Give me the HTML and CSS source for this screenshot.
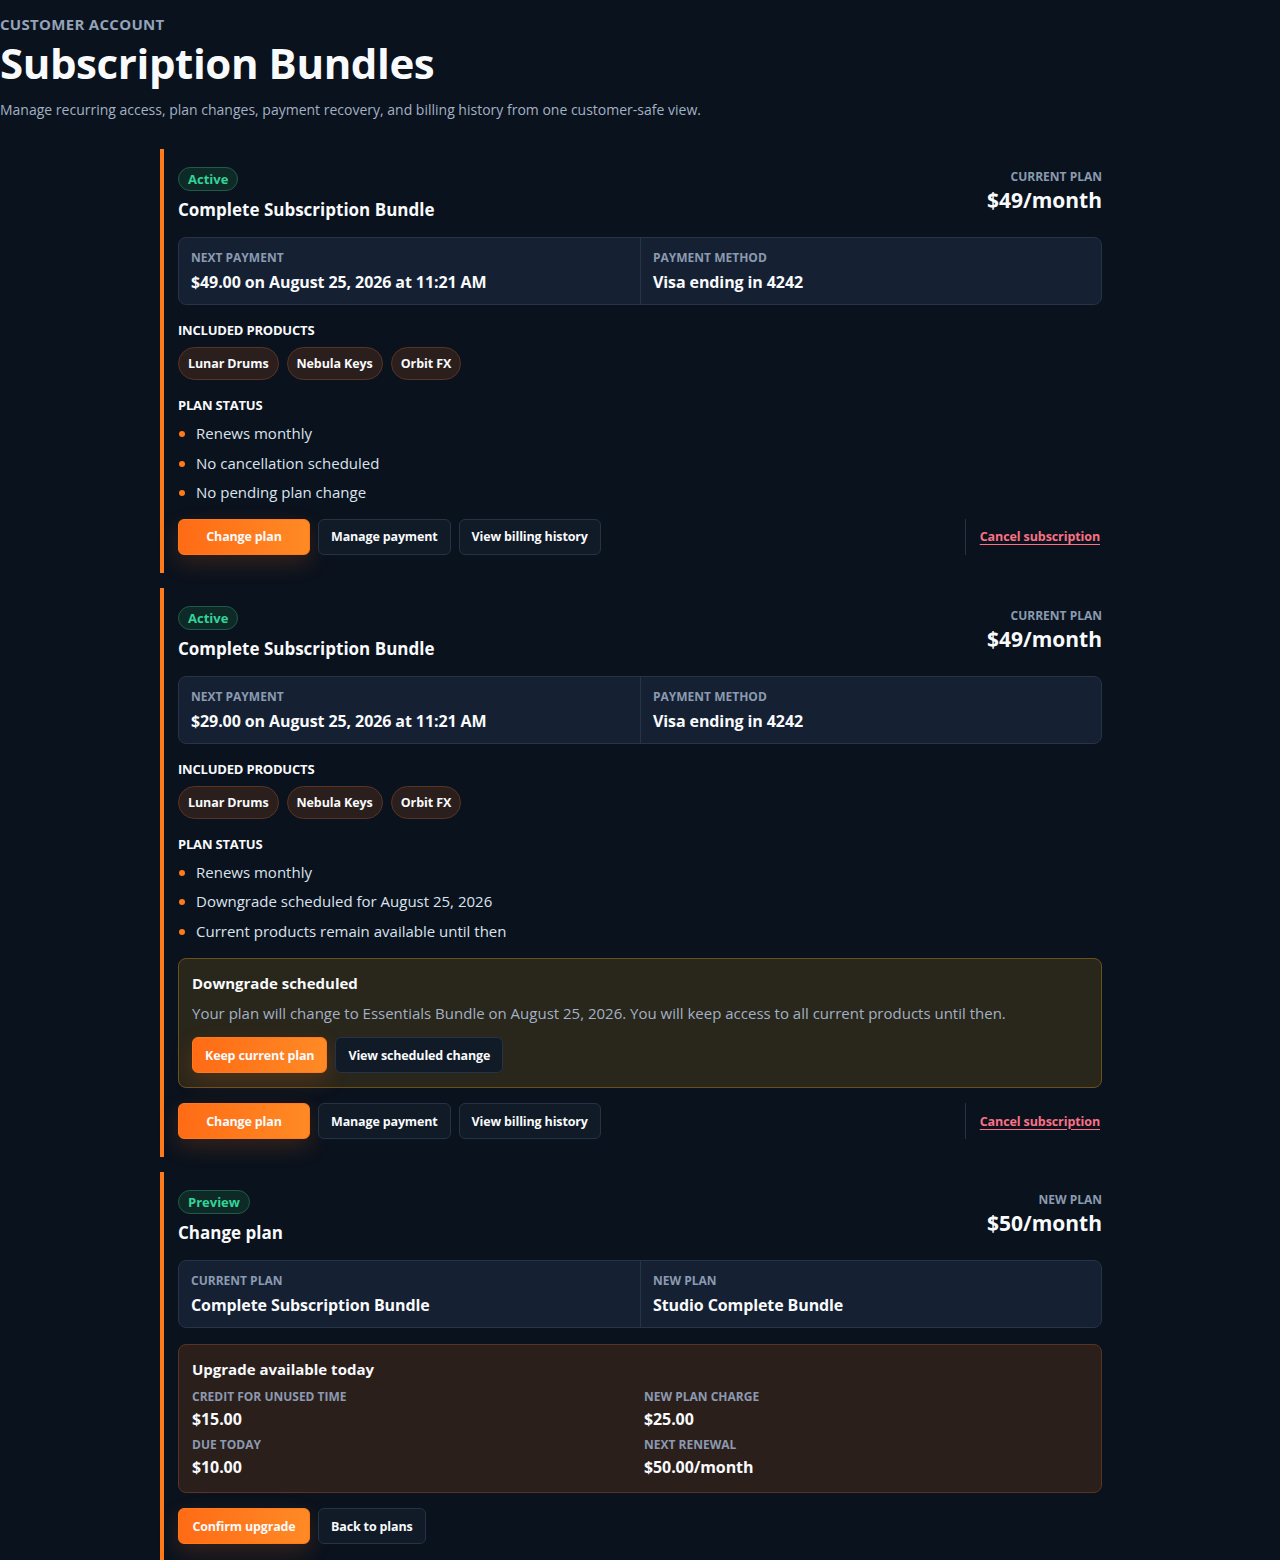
FILE: index.html
```html
<!DOCTYPE html>
<html lang="en">
<head>
  <meta charset="UTF-8">
  <title>Subscription Bundles</title>
  <link rel="stylesheet" href="styles.css">
</head>
<body>
  <header class="page-head">
    <div class="eyebrow">Customer account</div>
    <h1>Subscription Bundles</h1>
    <p class="lede">Manage recurring access, plan changes, payment recovery, and billing history from one customer-safe view.</p>
  </header>

  <main class="stack">
    <!-- bundle 1 -->
    <section class="card">
      <div class="card-head">
        <div>
          <span class="badge">Active</span>
          <h2>Complete Subscription Bundle</h2>
        </div>
        <div class="price">
          <div class="label">Current plan</div>
          <div class="amount">$49/month</div>
        </div>
      </div>

      <div class="facts">
        <div class="fact">
          <div class="label">Next payment</div>
          <div class="value">$49.00 on August 25, 2026 at 11:21 AM</div>
        </div>
        <div class="fact">
          <div class="label">Payment method</div>
          <div class="value">Visa ending in 4242</div>
        </div>
      </div>

      <h3>Included products</h3>
      <div class="chips">
        <span class="chip">Lunar Drums</span>
        <span class="chip">Nebula Keys</span>
        <span class="chip">Orbit FX</span>
      </div>

      <h3>Plan status</h3>
      <ul class="status">
        <li>Renews monthly</li>
        <li>No cancellation scheduled</li>
        <li>No pending plan change</li>
      </ul>

      <div class="actions">
        <button class="btn primary">Change plan</button>
        <button class="btn">Manage payment</button>
        <button class="btn">View billing history</button>
        <div class="danger-zone">
          <a href="#" class="cancel">Cancel subscription</a>
        </div>
      </div>
    </section>

    <!-- bundle 2 -->
    <section class="card">
      <div class="card-head">
        <div>
          <span class="badge">Active</span>
          <h2>Complete Subscription Bundle</h2>
        </div>
        <div class="price">
          <div class="label">Current plan</div>
          <div class="amount">$49/month</div>
        </div>
      </div>

      <div class="facts">
        <div class="fact">
          <div class="label">Next payment</div>
          <div class="value">$29.00 on August 25, 2026 at 11:21 AM</div>
        </div>
        <div class="fact">
          <div class="label">Payment method</div>
          <div class="value">Visa ending in 4242</div>
        </div>
      </div>

      <h3>Included products</h3>
      <div class="chips">
        <span class="chip">Lunar Drums</span>
        <span class="chip">Nebula Keys</span>
        <span class="chip">Orbit FX</span>
      </div>

      <h3>Plan status</h3>
      <ul class="status">
        <li>Renews monthly</li>
        <li>Downgrade scheduled for August 25, 2026</li>
        <li>Current products remain available until then</li>
      </ul>

      <div class="notice warn">
        <h4>Downgrade scheduled</h4>
        <p>Your plan will change to Essentials Bundle on August 25, 2026. You will keep access to all current products until then.</p>
        <div class="notice-actions">
          <button class="btn primary">Keep current plan</button>
          <button class="btn">View scheduled change</button>
        </div>
      </div>

      <div class="actions">
        <button class="btn primary">Change plan</button>
        <button class="btn">Manage payment</button>
        <button class="btn">View billing history</button>
        <div class="danger-zone">
          <a href="#" class="cancel">Cancel subscription</a>
        </div>
      </div>
    </section>

    <!-- plan change preview -->
    <section class="card">
      <div class="card-head">
        <div>
          <span class="badge">Preview</span>
          <h2>Change plan</h2>
        </div>
        <div class="price">
          <div class="label">New plan</div>
          <div class="amount">$50/month</div>
        </div>
      </div>

      <div class="facts">
        <div class="fact">
          <div class="label">Current plan</div>
          <div class="value">Complete Subscription Bundle</div>
        </div>
        <div class="fact">
          <div class="label">New plan</div>
          <div class="value">Studio Complete Bundle</div>
        </div>
      </div>

      <div class="notice upgrade">
        <h4>Upgrade available today</h4>
        <div class="summary">
          <div>
            <div class="label">Credit for unused time</div>
            <div class="value">$15.00</div>
          </div>
          <div>
            <div class="label">New plan charge</div>
            <div class="value">$25.00</div>
          </div>
          <div>
            <div class="label">Due today</div>
            <div class="value">$10.00</div>
          </div>
          <div>
            <div class="label">Next renewal</div>
            <div class="value">$50.00/month</div>
          </div>
        </div>
      </div>

      <div class="actions">
        <button class="btn primary">Confirm upgrade</button>
        <button class="btn">Back to plans</button>
      </div>
    </section>
  </main>
</body>
</html>
```

FILE: styles.css
```css
* {
  margin: 0;
  padding: 0;
  box-sizing: border-box;
}

html, body {
  background: #0a121d;
  color: #f8fafc;
  font-family: 'Open Sans', 'Noto Sans', sans-serif;
}

.page-head {
  padding-top: 14px;
}

.eyebrow {
  font-size: 15px;
  font-weight: 700;
  text-transform: uppercase;
  letter-spacing: 0.3px;
  color: #94a3b8;
  line-height: 20px;
}

h1 {
  font-size: 42px;
  font-weight: 700;
  line-height: 58px;
  letter-spacing: -0.4px;
}

.lede {
  margin-top: 8px;
  font-size: 14px;
  color: #a3b1c4;
  line-height: 20px;
}

.stack {
  width: 960px;
  margin: 29px auto 0;
  display: flex;
  flex-direction: column;
  gap: 15px;
}

.card {
  border-left: 4px solid #ff7a1a;
  padding: 18px 18px 18px 14px;
}

.card-head {
  display: flex;
  justify-content: space-between;
  align-items: flex-start;
}

.badge {
  display: inline-block;
  font-size: 13px;
  font-weight: 700;
  color: #34d399;
  background: #0e2a26;
  border: 1px solid #1f5b48;
  border-radius: 999px;
  padding: 1px 9px;
  line-height: 20px;
}

h2 {
  margin-top: 6px;
  font-size: 17px;
  font-weight: 700;
  line-height: 26px;
}

.price {
  text-align: right;
  padding-top: 2px;
}

.label {
  font-size: 12px;
  font-weight: 700;
  text-transform: uppercase;
  color: #8b9ab0;
  line-height: 16px;
}

.price .amount {
  font-size: 21px;
  font-weight: 700;
  line-height: 30px;
}

.facts {
  margin-top: 14px;
  display: grid;
  grid-template-columns: 1fr 1fr;
  background: #152133;
  border: 1px solid #273346;
  border-radius: 8px;
}

.fact {
  padding: 12px 12px 11px;
}

.fact + .fact {
  border-left: 1px solid #273346;
}

.value {
  margin-top: 5px;
  font-size: 16px;
  font-weight: 700;
  letter-spacing: -0.1px;
  line-height: 22px;
}

h3 {
  margin-top: 15px;
  font-size: 13px;
  font-weight: 700;
  text-transform: uppercase;
  letter-spacing: -0.2px;
  line-height: 20px;
}

.chips {
  margin-top: 7px;
  display: flex;
  gap: 8px;
}

.chip {
  font-size: 12.5px;
  font-weight: 700;
  letter-spacing: -0.1px;
  background: #2b1f1d;
  border: 1px solid #5a3422;
  border-radius: 999px;
  padding: 0 9px;
  line-height: 31px;
}

.status {
  list-style: none;
  margin-top: 4px;
}

.status li {
  position: relative;
  padding-left: 18px;
  font-size: 15px;
  color: #dbe3ee;
  line-height: 29.5px;
}

.status li::before {
  content: "";
  position: absolute;
  left: 1px;
  top: 12px;
  width: 6px;
  height: 6px;
  border-radius: 50%;
  background: #ff7a1a;
}

.actions {
  margin-top: 11px;
  display: flex;
  align-items: center;
  gap: 8px;
}

.notice + .actions {
  margin-top: 15px;
}

.btn {
  font-family: inherit;
  font-size: 12.5px;
  font-weight: 700;
  letter-spacing: -0.15px;
  color: #f8fafc;
  background: #111a27;
  border: 1px solid #263246;
  border-radius: 6px;
  padding: 0 12px;
  height: 36px;
  cursor: pointer;
}

.btn.primary {
  background: linear-gradient(90deg, #ff6b15, #ff8a25);
  border-color: #ff7a1a;
  box-shadow: 0 8px 22px rgba(255, 110, 30, 0.18);
}

.actions .btn.primary {
  min-width: 132px;
}

.danger-zone {
  margin-left: auto;
  border-left: 1px solid #263246;
  padding: 0 2px 0 14px;
  height: 36px;
  display: flex;
  align-items: center;
}

.cancel {
  font-size: 12.5px;
  font-weight: 700;
  letter-spacing: -0.1px;
  color: #fb7185;
  text-underline-offset: 3px;
}

.notice {
  margin-top: 12px;
  border-radius: 8px;
  padding: 13px 13px 14px;
}

.notice.warn {
  background: #29261b;
  border: 1px solid #6b501c;
}

.notice.upgrade {
  margin-top: 16px;
  background: #2b1f1c;
  border: 1px solid #5a3322;
}

.notice h4 {
  font-size: 15px;
  font-weight: 700;
  line-height: 22px;
}

.notice p {
  margin-top: 8px;
  font-size: 15px;
  color: #a3b1c4;
  line-height: 22px;
}

.notice-actions {
  margin-top: 13px;
  display: flex;
  gap: 8px;
}

.summary {
  margin-top: 9px;
  display: grid;
  grid-template-columns: 1fr 1fr;
  row-gap: 7px;
  column-gap: 8px;
}

.summary .value {
  margin-top: 3px;
}
```
